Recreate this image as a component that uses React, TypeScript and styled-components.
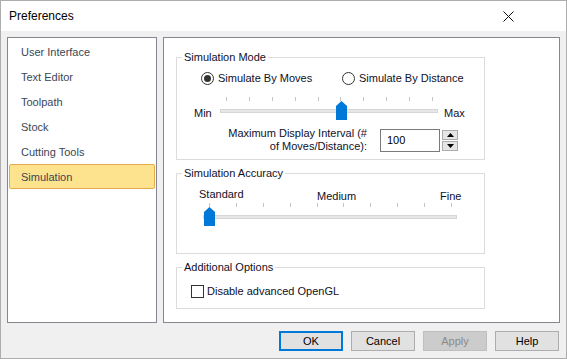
import React from "react";
import styled, { createGlobalStyle } from "styled-components";

const Global = createGlobalStyle`
  html, body { margin: 0; padding: 0; background: #ffffff; }
  body { font-family: "Liberation Sans", Arial, sans-serif; font-size: 11px; }
  * { box-sizing: border-box; }
`;

const Window = styled.div`
  width: 567px;
  height: 359px;
  border: 1px solid #adadad;
  display: flex;
  flex-direction: column;
  background: #f0f0f0;
`;

const TitleBar = styled.div`
  height: 30px;
  flex: none;
  background: #ffffff;
  display: flex;
  align-items: center;
  justify-content: space-between;
  padding-left: 8px;
  padding-right: 52px;
`;

const Title = styled.span`
  font-size: 12px;
  color: #000000;
`;

const Body = styled.div`
  flex: 1;
  display: flex;
  flex-direction: column;
  padding: 6px 6px 0 6px;
`;

const PanelsRow = styled.div`
  display: flex;
  gap: 6px;
  height: 286px;
`;

const NavPanel = styled.div`
  width: 150px;
  background: #ffffff;
  border: 1px solid #828790;
  padding: 1px;
  display: flex;
  flex-direction: column;
`;

const NavItem = styled.div<{ $selected?: boolean }>`
  height: 25px;
  display: flex;
  align-items: center;
  padding-left: 11px;
  padding-top: 1px;
  border: 1px solid ${(p) => (p.$selected ? "#e6ad4f" : "transparent")};
  border-radius: 2px;
  background: ${(p) => (p.$selected ? "#fde38d" : "transparent")};
  color: #3a4656;
  font-size: 11px;
`;

const ContentPanel = styled.div`
  flex: 1;
  background: #ffffff;
  border: 1px solid #828790;
  padding: 12px 0 0 12px;
  display: flex;
  flex-direction: column;
  gap: 6px;
`;

const Group = styled.fieldset<{ $h: number }>`
  width: 309px;
  height: ${(p) => p.$h}px;
  margin: 0;
  padding: 0;
  border: 1px solid #dcdcdc;
  min-width: 0;
  display: flex;
  flex-direction: column;
`;

const Legend = styled.legend`
  margin-left: 5px;
  padding: 0 2px;
  line-height: 14px;
  font-size: 11px;
  color: #101028;
`;

const RadioRow = styled.div`
  margin-top: 7px;
  height: 14px;
  display: flex;
  align-items: center;
  padding-left: 24px;
`;

const RadioOption = styled.label<{ $w?: number }>`
  display: flex;
  align-items: center;
  gap: 4px;
  width: ${(p) => (p.$w ? `${p.$w}px` : "auto")};
  color: #101028;
  font-size: 11px;
`;

const RadioCircle = styled.span<{ $checked?: boolean }>`
  width: 13px;
  height: 13px;
  border: 1px solid #333333;
  border-radius: 50%;
  background: #ffffff;
  display: flex;
  align-items: center;
  justify-content: center;
  flex: none;
  &::after {
    content: "";
    width: 7px;
    height: 7px;
    border-radius: 50%;
    background: ${(p) => (p.$checked ? "#333333" : "transparent")};
  }
`;

const SliderRow = styled.div`
  margin-top: 12px;
  display: flex;
  align-items: flex-start;
  padding-left: 17px;
`;

const EdgeLabel = styled.span<{ $w?: number }>`
  margin-top: 9px;
  line-height: 14px;
  width: ${(p) => (p.$w ? `${p.$w}px` : "auto")};
  color: #101028;
  font-size: 11px;
`;

const SliderBox = styled.div<{ $w: number; $ml?: number }>`
  position: relative;
  width: ${(p) => p.$w}px;
  height: 24px;
  margin-left: ${(p) => p.$ml ?? 0}px;
  margin-right: 6px;
  flex: none;
`;

const Ticks = styled.div`
  display: flex;
  justify-content: space-between;
  padding: 0 5px 0 6px;
  height: 4px;
`;

const Tick = styled.span`
  width: 1px;
  height: 4px;
  background: #c4c4c4;
`;

const Track = styled.div`
  margin-top: 8px;
  height: 4px;
  background: #e7e7e7;
  border: 1px solid #d6d6d6;
`;

const Thumb = styled.svg`
  position: absolute;
  top: 4px;
  width: 11px;
  height: 19px;
  margin-left: -5.5px;
`;

const Slider: React.FC<{ w: number; ticks: number; index: number; ml?: number }> = ({ w, ticks, index, ml }) => {
  const inner = w - 11;
  const left = 6 + (inner * index) / (ticks - 1);
  return (
    <SliderBox $w={w} $ml={ml}>
      <Ticks>
        {Array.from({ length: ticks }).map((_, i) => (
          <Tick key={i} />
        ))}
      </Ticks>
      <Track />
      <Thumb viewBox="0 0 11 19" style={{ left }}>
        <polygon points="0,5 5.5,0 11,5 11,19 0,19" fill="#0078d7" />
      </Thumb>
    </SliderBox>
  );
};

const IntervalRow = styled.div`
  margin-top: 6px;
  display: flex;
  align-items: center;
  padding-left: 30px;
`;

const IntervalLabel = styled.div`
  width: 160px;
  text-align: right;
  white-space: nowrap;
  line-height: 13px;
  color: #101028;
  font-size: 11px;
  margin-right: 13px;
`;

const NumberBox = styled.div`
  width: 60px;
  height: 23px;
  border: 1px solid #7a7a7a;
  background: #ffffff;
  display: flex;
  align-items: center;
  padding-left: 6px;
  color: #000000;
  font-size: 11px;
`;

const Spinner = styled.div`
  margin-left: 2px;
  display: flex;
  flex-direction: column;
  gap: 1px;
`;

const SpinButton = styled.div`
  width: 16px;
  height: 10px;
  border: 1px solid #acacac;
  background: #e5e5e5;
  display: flex;
  align-items: center;
  justify-content: center;
`;

const AccuracyLabels = styled.div`
  margin-top: 9px;
  padding-left: 22px;
  display: grid;
  grid-template-columns: 118px 123px auto;
  line-height: 14px;
  color: #101028;
  font-size: 11px;
`;

const AccLabel = styled.span<{ $raise?: boolean }>`
  margin-top: ${(p) => (p.$raise ? "-2px" : "0")};
`;

const CheckRow = styled.label`
  margin-top: 10px;
  height: 14px;
  display: flex;
  align-items: center;
  gap: 3px;
  padding-left: 14px;
  color: #101028;
  font-size: 11px;
`;

const CheckBox = styled.span`
  width: 13px;
  height: 13px;
  border: 1px solid #333333;
  background: #ffffff;
  flex: none;
`;

const ButtonRow = styled.div`
  margin-top: 8px;
  display: flex;
  justify-content: flex-end;
  gap: 8px;
  padding-right: 1px;
`;

const Button = styled.div<{ $default?: boolean; $disabled?: boolean }>`
  width: 64px;
  height: 20px;
  display: flex;
  align-items: center;
  justify-content: center;
  font-size: 11px;
  background: ${(p) => (p.$disabled ? "#cccccc" : "#e1e1e1")};
  border: ${(p) => (p.$default ? "2px solid #0078d7" : p.$disabled ? "1px solid #bfbfbf" : "1px solid #adadad")};
  color: ${(p) => (p.$disabled ? "#8a8a8a" : "#000000")};
`;

const navItems = ["User Interface", "Text Editor", "Toolpath", "Stock", "Cutting Tools", "Simulation"];

export default function App() {
  return (
    <>
      <Global />
      <Window>
        <TitleBar>
          <Title>Preferences</Title>
          <svg width="11" height="11" viewBox="0 0 11 11">
            <path d="M0.5 0.5 L10.5 10.5 M10.5 0.5 L0.5 10.5" stroke="#111" strokeWidth="1" fill="none" />
          </svg>
        </TitleBar>
        <Body>
          <PanelsRow>
            <NavPanel>
              {navItems.map((n) => (
                <NavItem key={n} $selected={n === "Simulation"}>
                  {n}
                </NavItem>
              ))}
            </NavPanel>
            <ContentPanel>
              <Group $h={110}>
                <Legend>Simulation Mode</Legend>
                <RadioRow>
                  <RadioOption $w={141}>
                    <RadioCircle $checked />
                    Simulate By Moves
                  </RadioOption>
                  <RadioOption>
                    <RadioCircle />
                    Simulate By Distance
                  </RadioOption>
                </RadioRow>
                <SliderRow>
                  <EdgeLabel $w={26}>Min</EdgeLabel>
                  <Slider w={218} ticks={10} index={5} />
                  <EdgeLabel>Max</EdgeLabel>
                </SliderRow>
                <IntervalRow>
                  <IntervalLabel>
                    Maximum Display Interval (#
                    <br />
                    of Moves/Distance):
                  </IntervalLabel>
                  <NumberBox>100</NumberBox>
                  <Spinner>
                    <SpinButton>
                      <svg width="7" height="4" viewBox="0 0 7 4">
                        <polygon points="0,4 3.5,0 7,4" fill="#000" />
                      </svg>
                    </SpinButton>
                    <SpinButton>
                      <svg width="7" height="4" viewBox="0 0 7 4">
                        <polygon points="0,0 7,0 3.5,4" fill="#000" />
                      </svg>
                    </SpinButton>
                  </Spinner>
                </IntervalRow>
              </Group>
              <Group $h={88}>
                <Legend>Simulation Accuracy</Legend>
                <AccuracyLabels>
                  <AccLabel $raise>Standard</AccLabel>
                  <AccLabel>Medium</AccLabel>
                  <AccLabel>Fine</AccLabel>
                </AccuracyLabels>
                <Slider w={254} ticks={10} index={0} ml={26} />
              </Group>
              <Group $h={49}>
                <Legend>Additional Options</Legend>
                <CheckRow>
                  <CheckBox />
                  Disable advanced OpenGL
                </CheckRow>
              </Group>
            </ContentPanel>
          </PanelsRow>
          <ButtonRow>
            <Button $default>OK</Button>
            <Button>Cancel</Button>
            <Button $disabled>Apply</Button>
            <Button>Help</Button>
          </ButtonRow>
        </Body>
      </Window>
    </>
  );
}
